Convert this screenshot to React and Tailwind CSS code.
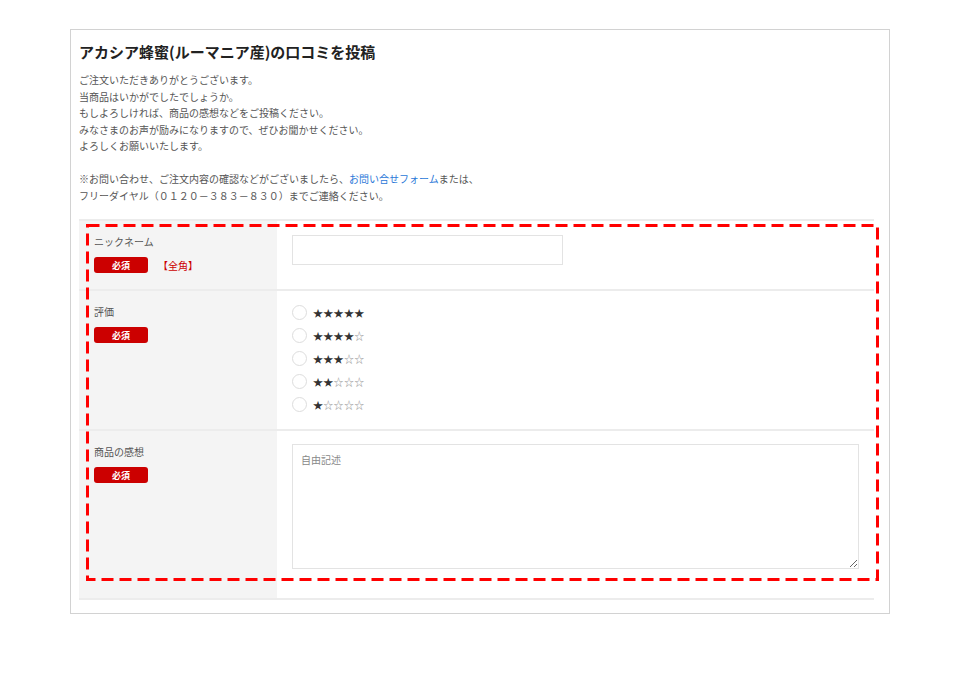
import React from 'react'

const font = { fontFamily: '"Noto Sans CJK JP", "Noto Sans", sans-serif' }

const ratings = [
  { full: 5 },
  { full: 4 },
  { full: 3 },
  { full: 2 },
  { full: 1 },
]

function Required() {
  return (
    <span className="flex h-4 w-[54px] items-center justify-center rounded-[3px] bg-[#cc0000] text-[9px] font-bold leading-none text-white">
      必須
    </span>
  )
}

function Stars({ full }) {
  return (
    <span className="text-[10px] leading-none tracking-[0.3px]">
      <span className="text-[#333]">{'★'.repeat(full)}</span>
      <span className="text-[#999]">{'☆'.repeat(5 - full)}</span>
    </span>
  )
}

export default function App() {
  return (
    <div className="min-h-[673px] bg-white pt-[29px]" style={font}>
      <div className="relative mx-auto w-[820px] border border-[#d2d2d2] pb-[13px] pl-[8px] pr-[15px] pt-[11px]">
        <h1 className="text-[15px] font-bold leading-[22px] text-[#222]">アカシア蜂蜜(ルーマニア産)の口コミを投稿</h1>

        <div className="mt-[9px] text-[10px] leading-[16.5px] text-[#555]">
          <p>ご注文いただきありがとうございます。</p>
          <p>当商品はいかがでしたでしょうか。</p>
          <p>もしよろしければ、商品の感想などをご投稿ください。</p>
          <p>みなさまのお声が励みになりますので、ぜひお聞かせください。</p>
          <p>よろしくお願いいたします。</p>
          <p className="mt-[16.5px]">
            ※お問い合わせ、ご注文内容の確認などがございましたら、
            <a className="text-[#2a78d8]">お問い合せフォーム</a>
            または、
          </p>
          <p>フリーダイヤル（０１２０－３８３－８３０）までご連絡ください。</p>
        </div>

        <div className="mt-[15px] border-b-2 border-[#ececec] text-[10px] text-[#555]">
          <div className="flex border-t-2 border-[#ececec]">
            <div className="w-[198px] shrink-0 bg-[#f4f4f4] px-[15px] pb-4 pt-[13px]">
              <div className="leading-4">ニックネーム</div>
              <div className="mt-[7px] flex items-center gap-[10px]">
                <Required />
                <span className="text-[#cc0000]">【全角】</span>
              </div>
            </div>
            <div className="flex-1 px-[15px] pt-[14px]">
              <input className="h-[30px] w-[271px] border border-[#e3e3e3] bg-white outline-none" />
            </div>
          </div>

          <div className="flex border-t-2 border-[#ececec]">
            <div className="w-[198px] shrink-0 bg-[#f4f4f4] px-[15px] pt-[13px]">
              <div className="leading-4">評価</div>
              <div className="mt-[7px]">
                <Required />
              </div>
            </div>
            <div className="flex-1 px-[15px] pb-[13px] pt-[10px]">
              {ratings.map((r) => (
                <label key={r.full} className="flex h-[23px] items-center gap-[6px]">
                  <span className="h-[15px] w-[15px] rounded-full border border-[#dddddd] bg-white" />
                  <Stars full={r.full} />
                </label>
              ))}
            </div>
          </div>

          <div className="flex border-t-2 border-[#ececec]">
            <div className="w-[198px] shrink-0 bg-[#f4f4f4] px-[15px] pt-[13px]">
              <div className="leading-4">商品の感想</div>
              <div className="mt-[7px]">
                <Required />
              </div>
            </div>
            <div className="flex-1 px-[15px] pb-[29px] pt-[13px]">
              <textarea
                placeholder="自由記述"
                className="block h-[125px] w-full border border-[#e3e3e3] px-[8px] py-[7px] text-[10px] leading-4 text-[#555] outline-none placeholder:text-[#888]"
                style={font}
              />
            </div>
          </div>
        </div>

        <svg className="pointer-events-none absolute left-[15px] top-[194px]" width="793" height="357">
          <rect x="1.5" y="1.5" width="790" height="354" fill="none" stroke="#ff0000" strokeWidth="3" strokeDasharray="12 6" />
        </svg>
      </div>
    </div>
  )
}
